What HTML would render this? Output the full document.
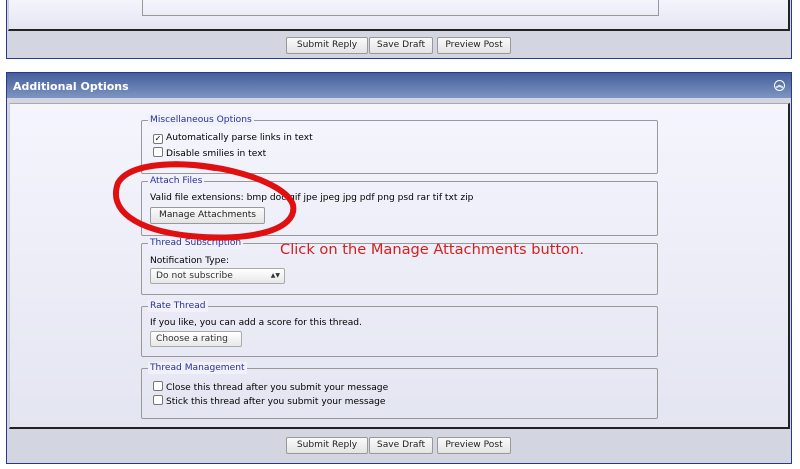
<!DOCTYPE html>
<html><head><style>
body{margin:0;width:800px;height:469px;background:#fff;position:relative;overflow:hidden;font-family:"DejaVu Sans","Liberation Sans",sans-serif;font-size:9.1px;color:#000}
.a{position:absolute}
.panel{position:absolute;border:1px solid #2b3787;background:#d3d6e1}
.inner{position:absolute;background:linear-gradient(#f5f5fd,#e3e5f1);border-right:2px solid #222;border-bottom:2px solid #222;border-top:1px solid #aaa;border-left:1px solid #ccc}
.fs{position:absolute;left:141px;width:515px;border:1px solid #999;border-radius:2px}
.lg{position:absolute;top:-7px;left:6px;padding:0 2px;color:#2b2f9c;background:#f0f1fa;font-size:9.1px;line-height:12px}
.btn{position:absolute;height:15px;border:1px solid #999;border-radius:2px;background:linear-gradient(#fafafa,#e4e4e4);font-size:9.1px;line-height:15px;text-align:center;color:#222}
.cb{display:inline-block;width:8px;height:8px;border:1px solid #777;border-radius:2px;background:#fff;vertical-align:-1px;margin-right:3px}
.sel{position:absolute;height:14px;border:1px solid #aaa;border-radius:2px;background:linear-gradient(#fff,#e8e8e8);line-height:14px;padding-left:5px;color:#333}
</style></head><body>
<div class="panel" style="left:6px;top:-2px;width:784px;height:59px">
  <div class="inner" style="left:1px;top:0;width:779px;height:30px;border-top:none">
    <div class="a" style="left:133px;top:0;width:515px;height:16px;border:1px solid #999;border-top:none"></div>
  </div>
  <div class="btn" style="left:279px;top:38px;width:80px">Submit Reply</div>
  <div class="btn" style="left:362px;top:38px;width:62px">Save Draft</div>
  <div class="btn" style="left:430px;top:38px;width:72px">Preview Post</div>
</div>
<div class="panel" style="left:6px;top:72px;width:784px;height:390px">
  <div class="a" style="left:0;top:0;width:784px;height:25px;background:linear-gradient(#44609d,#7e95c1);color:#fff;font-weight:bold;font-size:11px;line-height:27px;padding-left:6px;box-sizing:border-box">Additional Options
    <div class="a" style="right:6px;top:7px;width:9px;height:9px;border:1px solid #fff;border-radius:50%;font-size:7px;line-height:8px;text-align:center">︽</div></div>
  <div class="inner" style="left:2px;top:30px;width:778px;height:323px"></div>
  <div class="btn" style="left:279px;top:364px;width:80px">Submit Reply</div>
  <div class="btn" style="left:362px;top:364px;width:62px">Save Draft</div>
  <div class="btn" style="left:430px;top:364px;width:72px">Preview Post</div>
</div>
<div class="fs" style="top:120px;height:52px"><span class="lg">Miscellaneous Options</span>
  <div class="a" style="left:11px;top:12px"><span class="cb" style="font-size:8px;line-height:8px;text-align:center">✓</span>Automatically parse links in text</div>
  <div class="a" style="left:11px;top:26px"><span class="cb"></span>Disable smilies in text</div></div>
<div class="fs" style="top:181px;height:53px"><span class="lg">Attach Files</span>
  <div class="a" style="left:8px;top:11px;white-space:nowrap">Valid file extensions: bmp doc gif jpe jpeg jpg pdf png psd rar tif txt zip</div>
  <div class="btn" style="left:8px;top:25px;width:113px">Manage Attachments</div></div>
<div class="fs" style="top:243px;height:50px"><span class="lg">Thread Subscription</span>
  <div class="a" style="left:8px;top:12px">Notification Type:</div>
  <div class="sel" style="left:8px;top:24px;width:128px">Do not subscribe<span style="position:absolute;right:4px;font-size:6px">▲▼</span></div></div>
<div class="fs" style="top:306px;height:49px"><span class="lg">Rate Thread</span>
  <div class="a" style="left:8px;top:11px">If you like, you can add a score for this thread.</div>
  <div class="sel" style="left:8px;top:24px;width:85px">Choose a rating</div></div>
<div class="fs" style="top:368px;height:49px"><span class="lg">Thread Management</span>
  <div class="a" style="left:11px;top:12px"><span class="cb"></span>Close this thread after you submit your message</div>
  <div class="a" style="left:11px;top:26px"><span class="cb"></span>Stick this thread after you submit your message</div></div>
<div class="a" style="left:280px;top:241px;color:#d42020;font-size:14.6px;white-space:nowrap">Click on the Manage Attachments button.</div>
<svg class="a" style="left:0;top:0" width="800" height="469"><path d="M160 165 C210 160 285 180 293 205 C298 230 250 242 190 236 C135 230 108 210 118 183 C128 165 170 160 215 168" fill="none" stroke="#e01010" stroke-width="6" stroke-linecap="round"/></svg>
</body></html>
